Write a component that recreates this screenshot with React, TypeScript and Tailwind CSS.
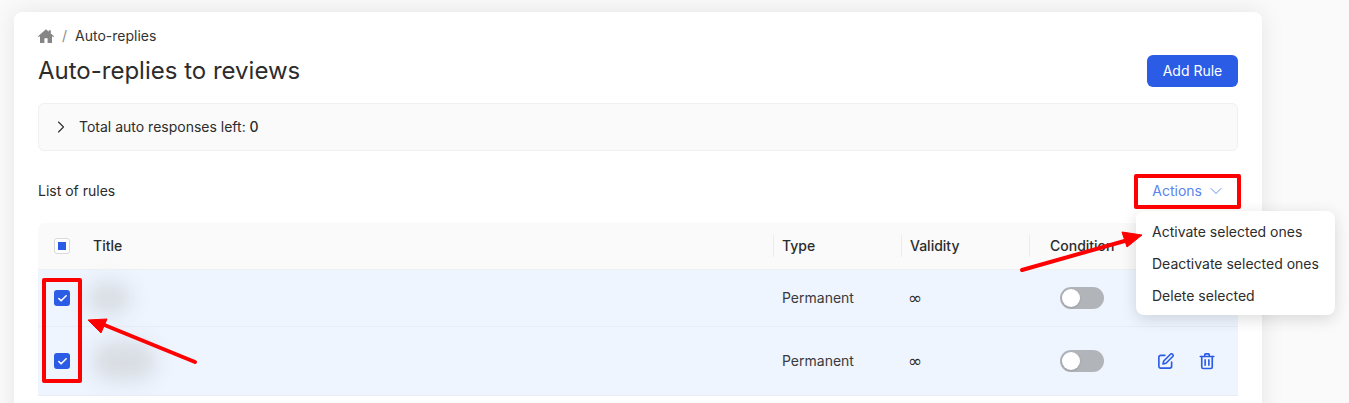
import React from "react";
import { ChevronRight, ChevronDown, Check } from "lucide-react";

function Box({ checked }: { checked?: boolean }) {
  if (checked) {
    return (
      <span className="flex h-4 w-4 items-center justify-center rounded-[3px] bg-[#2b5ce6]">
        <Check size={11} strokeWidth={3.5} className="text-white" />
      </span>
    );
  }
  return (
    <span className="flex h-4 w-4 items-center justify-center rounded-[3px] border border-[#d9d9d9] bg-white">
      <span className="h-2 w-2 bg-[#2b5ce6]" />
    </span>
  );
}

function Toggle() {
  return (
    <span className="flex h-[22px] w-11 items-center rounded-full bg-[#b1b5ba] pl-0.5">
      <span className="h-[18px] w-[18px] rounded-full bg-white shadow-sm" />
    </span>
  );
}

function Row({ h, blur, actions, border }: { h: string; blur: string; actions?: boolean; border: string }) {
  return (
    <div className={`flex items-center bg-[#eef5ff] ${h} ${border}`}>
      <div className="flex w-[48px] shrink-0 justify-center"><Box checked /></div>
      <div className="w-[696px] shrink-0">
        <div className={`${blur} rounded-full bg-[#d8dce3] blur-[10px]`} />
      </div>
      <div className="w-[128px] shrink-0 text-[#3a3a3a]">Permanent</div>
      <div className="w-[128px] shrink-0 font-['DejaVu_Sans',sans-serif] text-[17px] leading-5"><span className="-ml-[2px] block">∞</span></div>
      <div className="flex w-[88px] shrink-0 justify-center"><Toggle /></div>
      {actions && (
        <div className="flex items-center gap-[23px] pl-[31px] text-[#2b5ce6]">
          <svg width="18" height="18" viewBox="0 0 24 24" fill="none" stroke="currentColor" strokeWidth="2.2" strokeLinecap="round" strokeLinejoin="round">
            <path d="M10.500 4.500H5a2.500 2.500 0 0 0-2.500 2.500v12A2.500 2.500 0 0 0 5 21.500h12a2.500 2.500 0 0 0 2.500-2.500v-5.500" />
            <path d="M18.300 2.700a2.200 2.200 0 0 1 3 3L12 15l-4 1 1-4z" />
          </svg>
          <svg width="18" height="18" viewBox="0 0 24 24" fill="none" stroke="currentColor" strokeWidth="2.2" strokeLinecap="round" strokeLinejoin="round">
            <path d="M3 6h18" />
            <path d="M9 6V3.500A1 1 0 0 1 10 2.500h4a1 1 0 0 1 1 1V6" />
            <path d="M5 6v14a2 2 0 0 0 2 2h10a2 2 0 0 0 2-2V6" />
            <path d="M9.500 10.500v7M14.500 10.500v7" />
          </svg>
        </div>
      )}
    </div>
  );
}

function Sep() {
  return <span className="h-[22px] w-px bg-[#ececec]" />;
}

export default function App() {
  return (
    <div className="relative h-[403px] w-[1349px] overflow-hidden bg-[#fafafa] pl-[14px] pt-3 font-['Inter',sans-serif] text-sm text-[#2c2c2c]">
      <div className="h-[420px] w-[1248px] rounded-t-lg bg-white px-6 pt-[14px] shadow-[0_0_24px_rgba(0,0,0,0.09)]">
        <div className="flex h-5 items-center text-[#333]">
          <svg width="16" height="16" viewBox="0 0 16 16" fill="#858585">
            <path d="M8 1.200 0 8.300l.8.900L2 8.100V15h4.400v-4.800h3.200V15H14V8.100l1.200 1.100.8-.9L12.800 5.500V2.200h-2v1.500z" />
          </svg>
          <span className="ml-2 text-[#8a8a8a]">/</span>
          <span className="ml-2">Auto-replies</span>
        </div>
        <div className="mt-[6px] flex h-[36px] items-center justify-between">
          <h1 className="mt-[2px] text-2xl font-normal leading-8">Auto-replies to reviews</h1>
          <button className="mt-[2px] h-8 w-[91px] rounded-md bg-[#2b5ce6] text-white">Add Rule</button>
        </div>
        <div className="mt-[15px] flex h-12 items-center rounded-md border border-[#f0f0f0] bg-[#fafafa] pl-[13px]">
          <ChevronRight size={20} strokeWidth={1.3} className="-ml-px" />
          <span className="ml-[8px]">Total auto responses left: <span className="font-medium">0</span></span>
        </div>
        <div className="mt-[24px] flex h-8 items-center justify-between">
          <span>List of rules</span>
          <span className="mr-[12px] flex items-center gap-[4px] text-[#5b83ee]">
            Actions <ChevronDown size={20} strokeWidth={1.1} />
          </span>
        </div>
        <div className="mt-4">
          <div className="flex h-[47px] items-center rounded-t-md border-b border-[#f0f0f0] bg-[#fafafa] font-medium">
            <div className="flex w-[48px] shrink-0 justify-center"><Box /></div>
            <div className="flex w-[688px] shrink-0 items-center justify-between pl-[7px]"><span>Title</span><Sep /></div>
            <div className="flex w-[128px] shrink-0 items-center justify-between pl-[8px]"><span>Type</span><Sep /></div>
            <div className="flex w-[128px] shrink-0 items-center justify-between pl-[8px]"><span>Validity</span><Sep /></div>
            <div className="pl-[20px]">Condition</div>
          </div>
          <Row h="h-[57px]" blur="h-8 w-11 ml-[1px]" border="border-b border-[#e8edf5]" />
          <Row h="h-[69px]" blur="h-10 w-[64px] ml-[6px]" actions border="border-b border-[#e8edf5]" />
        </div>
      </div>

      <div className="absolute left-[1136px] top-[211px] w-[199px] rounded-lg bg-white pb-[3px] pt-[5px] shadow-[0_4px_16px_rgba(0,0,0,0.14)]">
        <div className="flex h-8 items-center pl-4">Activate selected ones</div>
        <div className="flex h-8 items-center pl-4">Deactivate selected ones</div>
        <div className="flex h-8 items-center pl-4">Delete selected</div>
      </div>

      <div className="absolute left-[1134px] top-[174px] h-[35px] w-[107px] rounded-[2px] border-4 border-[#fe0000]" />
      <div className="absolute left-[42px] top-[278px] h-[105px] w-10 rounded-[2px] border-4 border-[#fe0000]" />

      <svg className="absolute left-0 top-0" width="1349" height="403" fill="none">
        <path d="M195 362 102 324" stroke="#fe0000" strokeWidth="4" strokeLinecap="round" />
        <path d="M88 320 107 319 101 333z" fill="#fe0000" stroke="#fe0000" strokeWidth="1" strokeLinejoin="round" />
        <path d="M1022 270 1128 240" stroke="#fe0000" strokeWidth="4" strokeLinecap="round" />
        <path d="M1142 235 1122 232 1127 247z" fill="#fe0000" stroke="#fe0000" strokeWidth="1" strokeLinejoin="round" />
      </svg>
    </div>
  );
}
